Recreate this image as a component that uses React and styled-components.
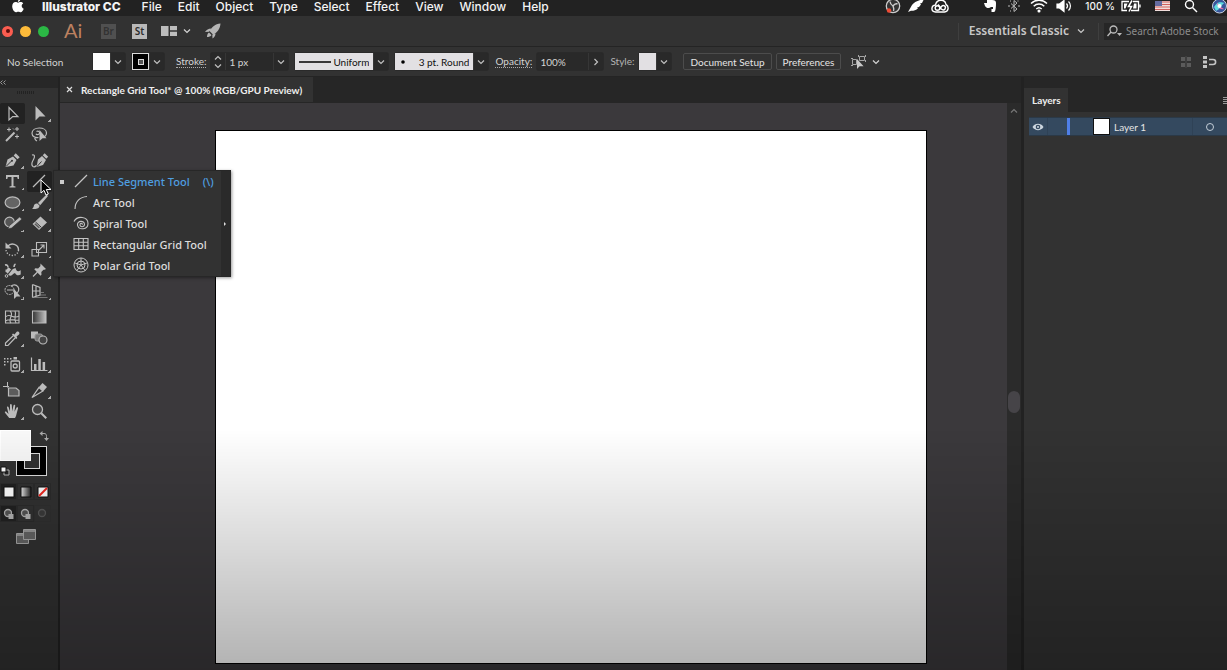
import React, { useState } from "react";
import styled, { createGlobalStyle, css } from "styled-components";

const menus = ["File", "Edit", "Object", "Type", "Select", "Effect", "View", "Window", "Help"];

const icons = {
	selection: <path d="M5 2.5v12.5l3.7-3.4h5.2z" fill="none" stroke="currentColor" strokeWidth="1.2" />,
	direct: <path d="M4.5 1v14.5l4-3.9h6z" fill="currentColor" />,
	wand: (
		<>
			<path d="M2 15 10.5 6.5" stroke="currentColor" strokeWidth="2" />
			<path d="M5 1.5v4M3 3.5h4M13 1v4M11 3h4M13 8.5v4M11 10.5h4M9 2.5l1 1" stroke="currentColor" />
		</>
	),
	lasso: (
		<>
			<path
				d="M7.5 11.500C4 12 1 10.300 1 7.300 1 4 4.300 2 8.300 2S15.500 4 15.500 7c0 1.700-.8 3-2 3.800M5.500 5.500c1.700-.8 3.700.4 3 2-.6 1.400-3 1.600-3.500.2M4 10.500c-.6 2 .2 3.600 2 4.500"
				fill="none"
				stroke="currentColor"
				strokeWidth="1.2"
			/>
			<path d="M8.500 4v11l3-2.700h4z" fill="currentColor" />
		</>
	),
	pen: (
		<>
			<path d="M1.500 15 3.500 7.500 9 4.500l3.500 3.500-3 5.500z" fill="currentColor" />
			<path d="m9.700 3.500 2-2.200 4 4-2.200 2z" fill="currentColor" />
			<path d="M2 14.500 7.500 9" stroke="#323232" />
			<circle cx="8" cy="8.700" r="1" fill="#323232" />
		</>
	),
	curvature: (
		<>
			<path d="M5.500 15 7 7.500 11 4l4 4-3 5z" fill="currentColor" />
			<path d="m11.700 3.200 2-2 3.500 3.500-2 2z" fill="currentColor" />
			<path d="M1 3c3-1 3 2 1.500 4.500S0 13 2 14.500c1.500 1 3-.5 3.500-1" fill="none" stroke="currentColor" strokeWidth="1.200" />
			<path d="m6 14.500 4.500-5" stroke="#323232" />
		</>
	),
	type: (
		<path
			d="M2 2h13v4h-1.300l-.5-2H9.500v9l2 .4v1.200h-6v-1.200l2-.4V4H3.800l-.5 2H2z"
			fill="currentColor"
		/>
	),
	line: <path d="M2 14 14 2" stroke="currentColor" strokeWidth="1.200" />,
	ellipse: <ellipse cx="8.500" cy="8.500" rx="7.400" ry="5.600" fill="#646464" stroke="currentColor" strokeWidth="1.200" />,
	brush: (
		<>
			<path d="M15.500.5 7 9l2.200 2.200L17 2z" fill="currentColor" />
			<path d="M6.300 9.500c-2-.3-3.300 1-3.500 2.500-.1 1.200-.8 2-1.800 2.700 3.500.6 7.500.2 7.500-3.200z" fill="currentColor" />
		</>
	),
	shaper: (
		<>
			<circle cx="5.500" cy="7" r="4.800" fill="#555" stroke="currentColor" strokeWidth="1.200" />
			<path d="m4 14 1.300-3.300L15.500 2 18 4 7.700 13z" fill="currentColor" stroke="#323232" strokeWidth=".7" />
		</>
	),
	eraser: (
		<>
			<path d="M9.500 1.500 16 7.500 8 15 1.500 9z" fill="currentColor" />
			<path d="m4.500 7 5.800 5.300" stroke="#323232" />
			<path d="m3.300 9.200 4.600 4.200 1-1-4.500-4.200z" fill="#5a5a5a" />
		</>
	),
	rotate: (
		<>
			<path d="M3.500 5.500C7 1 14.500 3 14.500 9" fill="none" stroke="currentColor" strokeWidth="1.400" />
			<path d="M1.500 1.500v6h6z" fill="currentColor" />
			<path d="M14.500 9C14 16 3 16.500 2 9" fill="none" stroke="currentColor" strokeWidth="1.400" strokeDasharray="1.200 1.600" />
		</>
	),
	scale: (
		<g fill="none" stroke="currentColor" strokeWidth="1.100">
			<path d="M5.500 1.500h10v10h-10zM1 8.500h6.500V15H1z" />
			<path d="m8 9 5-5M9.500 4H13v3.500" />
		</g>
	),
	width: (
		<>
			<path d="M4 5.500c1.500 0 2 1.500 3.500 2L11.500 6c.5 2 1.500 3.500 3 3.200 1 0 1.700-.6 2.200-1.200v4.500c-2.500 1.700-4.500.5-5.700-1.500-2 0-2.500 3.500-5.500 2.500C3.500 13 4 10.500 1.500 10V7.500c1 .3 2-.5 2.500-2z" fill="currentColor" />
			<path d="m2.500 14 8-10" stroke="#323232" strokeWidth="1.200" />
			<circle cx="2.500" cy="14" r="1.300" fill="none" stroke="currentColor" />
			<path d="M1 3c2-.5 3 .5 3 2.500M10 5c0-1.500.5-2.500 1.500-3" fill="none" stroke="currentColor" strokeWidth="1.600" />
		</>
	),
	pin: (
		<>
			<path d="m9.500 1.500 5.500 5.500-1.500.7-1 .1-2.200 2.200.2 2.800-1 1L3.300 7.300l1-1 2.800.2 2.200-2.200.1-1z" fill="currentColor" />
			<path d="M6.500 10 2 14.500" stroke="currentColor" strokeWidth="1.300" />
		</>
	),
	builder: (
		<>
			<circle cx="5.500" cy="7" r="4.500" fill="none" stroke="currentColor" strokeDasharray="2 .8" />
			<path d="M7 3.300a4.500 4.500 0 1 1 5.500 7M3 7h7" fill="none" stroke="currentColor" strokeWidth="1.200" />
			<path d="M10 6v10l2.600-2.600h3.900z" fill="currentColor" />
		</>
	),
	perspective: (
		<>
			<path d="M1.500 1.500v13M1.500 1.500 9 4.500V12L1.500 14.500M1.500 8H9M5 3v10" fill="none" stroke="currentColor" strokeWidth="1.200" />
			<path d="M3 14.500h13.500M8 12h7M9.500 9.500H13" stroke="#8a8a8a" strokeWidth=".8" />
		</>
	),
	mesh: (
		<g fill="none" stroke="currentColor" strokeWidth="1.100">
			<path d="M1.500 2h13.500v12H1.500z" />
			<path d="M1.500 8C6 3 9 11 15 7M6 2c5 4-3 8 1 12M11 2c2 4-2 7 1 12M1.500 12c4-3 9 0 13.500-1" />
		</g>
	),
	gradient: (
		<>
			<defs>
				<linearGradient id="toolGradient">
					<stop offset="0" stopColor="#333" />
					<stop offset="1" stopColor="#c4c4c4" />
				</linearGradient>
			</defs>
			<path d="M1.500 2h13.500v12H1.500z" fill="url(#toolGradient)" stroke="currentColor" strokeWidth="1.100" />
		</>
	),
	dropper: (
		<>
			<path d="m9.500 5.500-8 7.500v2.500H4l7.500-8" fill="none" stroke="currentColor" strokeWidth="1.200" />
			<path d="m8 4.500 1-1 1.500 1 2-2.500c1.500-1.500 4 .8 2.500 2.500l-2.500 2 .8 1.500-1 1z" fill="currentColor" />
		</>
	),
	blend: (
		<>
			<path d="M0 1.500h7v7H0z" fill="currentColor" />
			<rect x="4" y="4" width="7.500" height="7" rx="2" fill="#777" stroke="#999" />
			<circle cx="12" cy="10" r="4" fill="#444" stroke="currentColor" strokeWidth="1.100" />
		</>
	),
	sprayer: (
		<>
			<path d="M0 2h1.500v1.500H0zM3 2h1.500v1.500H3zM6 2h1.500v1.500H6zM0 5h1.500v1.500H0zM3 5h1.500v1.500H3zM0 8h1.500v1.500H0zM9.500 1H13v2.500H9.500z" fill="currentColor" />
			<rect x="7" y="5" width="8.500" height="10" rx="1" fill="none" stroke="currentColor" strokeWidth="1.300" />
			<circle cx="11.200" cy="10" r="2" fill="none" stroke="currentColor" strokeWidth="1.300" />
		</>
	),
	graph: (
		<>
			<path d="M.5 1.500v13h16" fill="none" stroke="currentColor" strokeWidth="1.200" />
			<path d="M3 8h2.500v6H3zM7.300 3h2.500v11H7.300zM11.600 6h2.500v8h-2.500z" fill="currentColor" />
		</>
	),
	artboard: (
		<>
			<path d="M3.500 0v5.500M-1 4.500h6" stroke="currentColor" />
			<path d="M4.500 6H12l3 2.500V14H4.500z" fill="#5c5c5c" stroke="currentColor" strokeWidth="1.200" />
		</>
	),
	slice: (
		<>
			<path d="M1 15.500 8 5.500l4 3.500z" fill="none" stroke="currentColor" strokeWidth="1.300" />
			<path d="m8 5 3.500-4 4.500 4-3.500 4z" fill="currentColor" />
		</>
	),
	hand: (
		<path
			d="M5.200 15 1 9.700c-.6-1.200.8-1.700 1.600-.8L4.500 11 3 4.500c-.2-1.300 1.300-1.500 1.600-.3L6 8.500 6 2c0-1.300 1.700-1.300 1.800 0l.4 6.300L9.500 2.500c.3-1.200 1.800-.9 1.700.3l-.7 6 2-4c.6-1 1.900-.4 1.500.7-.8 2.500-1.200 5-2 7.500l-1 2z"
			fill="currentColor"
		/>
	),
	zoom: (
		<>
			<circle cx="6.500" cy="6.500" r="5" fill="#444" stroke="currentColor" strokeWidth="1.300" />
			<path d="m10.300 10.300 5 5" stroke="currentColor" strokeWidth="2" />
		</>
	),
	arc: <path d="M2 15C2 7.500 7 3 14 2.500" fill="none" stroke="currentColor" strokeWidth="1.100" />,
	spiral: (
		<path
			d="M1 6.500C4 .5 15 1 15 8.500c0 6.500-9.500 7-10.500 1.500C4 5.500 11.500 5 11.500 9.500c-.3 3-4.800 2.800-4.500 0 .3-1.800 2.500-1.500 2.300.2"
			fill="none"
			stroke="currentColor"
			strokeWidth="1.100"
		/>
	),
	grid: <path d="M1 2.500h14v11H1zM1 6.200h14M1 9.800h14M5.700 2.500v11M10.300 2.500v11" fill="none" stroke="currentColor" strokeWidth="1.100" />,
	polar: (
		<g fill="none" stroke="currentColor">
			<circle cx="8" cy="8" r="7" />
			<circle cx="8" cy="8" r="4" />
			<path d="M8 1v7l6.500-2.200M8 8l4.200 5.700M8 8l-4.200 5.700M8 8 1.500 5.800" />
		</g>
	),
};

const toolGroups = [
	["selection", "direct", "wand", "lasso"],
	["pen", "curvature", "type", "line", "ellipse", "brush", "shaper", "eraser"],
	["rotate", "scale", "width", "pin", "builder", "perspective"],
	["mesh", "gradient", "dropper", "blend"],
	["sprayer", "graph"],
	["artboard", "slice", "hand", "zoom"],
];

const singleTools = ["selection", "wand", "lasso", "curvature", "mesh", "gradient", "blend", "artboard", "zoom", "line"];

const lineTools = [
	{ icon: "line", name: "Line Segment Tool", shortcut: "(\\)" },
	{ icon: "arc", name: "Arc Tool" },
	{ icon: "spiral", name: "Spiral Tool" },
	{ icon: "grid", name: "Rectangular Grid Tool" },
	{ icon: "polar", name: "Polar Grid Tool" },
];

const Icon = ({ name, size = 17 }) => (
	<svg width={size} height={size} viewBox="0 0 17 17" aria-hidden="true">
		{icons[name]}
	</svg>
);

const Chevron = ({ dir = "down" }) => (
	<svg width="8" height="8" viewBox="0 0 8 8" fill="none" stroke="currentColor" strokeWidth="1.200" aria-hidden="true">
		<path d={{ down: "M1 2.500 4 5.500 7 2.500", right: "M2.500 1 5.500 4 2.500 7", up: "M1 5.500 4 2.500 7 5.500" }[dir]} />
	</svg>
);

const MenuBar = () => (
	<MenuBarRow>
		<MenuList aria-label="Application menu">
			<AppleButton aria-label="Apple">
				<svg width="12" height="14" viewBox="0 0 12 14" fill="#fff">
					<path d="M8.300 0c.1 1.500-1 2.800-2.400 2.900C5.800 1.500 7 .2 8.300 0zM6 3.800c.7 0 1.400-.7 2.600-.7 1 0 2 .5 2.600 1.400-2.200 1.300-1.900 4.300.5 5.200-.5 1.500-1.700 3.500-3 3.500-.9 0-1.300-.5-2.400-.5s-1.500.5-2.400.5C2 13.200.2 10 .2 7.300c0-2.700 1.700-4.200 3.400-4.200 1.100 0 1.800.7 2.400.7z" />
				</svg>
			</AppleButton>
			<MenuItem $bold>Illustrator CC</MenuItem>
			{menus.map((el) => (
				<MenuItem key={el}>{el}</MenuItem>
			))}
		</MenuList>
		<StatusList>
			<svg width="16" height="16" viewBox="0 0 16 16">
				<circle cx="8" cy="8" r="6.700" fill="#333" stroke="#ccc" strokeWidth="1.300" />
				<path d="M5 3.500c.2 2.500 1.500 3.500 3 4.500M12.500 6C10.500 5 9 6.500 8 8M8.500 13c1-2-.2-3.500-.5-5" stroke="#ccc" strokeWidth="1.400" fill="none" />
				<circle cx="4" cy="12.500" r="2.200" fill="#ee4b35" />
			</svg>
			<svg width="16" height="16" viewBox="0 0 16 16" fill="#fff">
				<path d="M0 14 4 7c2-3 7-5 12-6l-2 4-2 .5 1 1-2 2.500-2 .5 1 .8c-2 2-5 2.700-7 2.500z" />
			</svg>
			<svg width="18" height="16" viewBox="0 0 18 16" fill="none" stroke="#fff" strokeWidth="1.400">
				<path d="M4.500 14C-.5 13.500 0 7.500 4.500 7 5.500 1 14 .5 15 6.500c3 1.500 3 7-1.500 7.500z" />
				<circle cx="6.500" cy="10" r="2.300" />
				<path d="M8.300 11.500 10.500 8.500c2-2.500 5 0 3.500 2.500-1 1.500-2.500 1-3.700 0L7 6.500" />
			</svg>
			<StatusGap />
			<svg width="14" height="16" viewBox="0 0 14 16" fill="#fff">
				<path d="M1 5h3V2l2-1 3 1c3 0 4 1 4 3 0 4-.3 9-2 9H8.500v-3H10V9H8c-2 2-5 1-6-1z" />
			</svg>
			<svg width="16" height="16" viewBox="-4 0 16 16" fill="none" stroke="#b9b9b9">
				<path d="M3 5.500 9 11l-3 2.500v-11L9 5 3 10.500M0 8h2M10 8h2M2 3h1M9.500 3h1M2 13h1" />
			</svg>
			<svg width="22" height="16" viewBox="-3 0 22 16" fill="none" stroke="#fff" strokeWidth="1.500">
				<path d="M1 5.500c4.500-4.500 11.500-4.500 16 0M3.700 8.300c3-3 7.600-3 10.600 0M6.300 11c1.600-1.500 3.800-1.500 5.400 0" />
				<circle cx="9" cy="13" r=".8" fill="#fff" />
			</svg>
			<svg width="16" height="16" viewBox="0 0 16 16" fill="none" stroke="#fff" strokeWidth="1.200">
				<path d="M1 6h2.500L8 2.500v11L3.500 10H1z" fill="#fff" />
				<path d="M10.500 5.500c1.300 1.500 1.300 3.500 0 5M12.500 3.500c2.600 2.500 2.600 6.500 0 9" />
			</svg>
			<Battery>100 %</Battery>
			<svg width="20" height="16" viewBox="0 0 20 16" fill="none" stroke="#fff">
				<path d="M8 3.500H1v9h5M12 3.500h5.500v9H10M19 6.500v3" strokeWidth="1.300" />
				<path d="M3 5.500h3.500l-2 5H3zM13 5.500h2.500v5H12z" fill="#fff" stroke="none" />
				<path d="M11 2.500 7.500 8.500H10.500L8 13.500" strokeWidth="1.500" />
			</svg>
			<StatusGap $small />
			<svg width="15" height="16" viewBox="0 0 15 16">
				<path d="M0 3h15v10H0z" fill="#f1dedc" />
				<path d="M0 4h15M0 6.500h15M0 9h15M0 11.500h15" stroke="#d1605d" strokeWidth="1.200" />
				<path d="M0 3h7v5H0z" fill="#656ba0" />
			</svg>
			<StatusGap $small />
			<svg width="14" height="16" viewBox="0 0 14 16" fill="none" stroke="#fff" strokeWidth="1.400">
				<circle cx="5.500" cy="6.500" r="4" />
				<path d="m8.500 9.500 4.500 4.500" />
			</svg>
			<StatusGap $small />
			<svg width="15" height="16" viewBox="0 0 15 16">
				<circle cx="7.500" cy="8" r="7" fill="#38569b" stroke="#cad1df" />
				<path d="M2 9c4-6 6-5 11-4-3 0-4 6-9 8z" fill="#60dce0" />
				<path d="M5 4c2 5 4 5 7 7-4 1-7-2-7-7z" fill="#e66fae" />
				<circle cx="7.500" cy="8" r="2" fill="#fff" />
			</svg>
		</StatusList>
	</MenuBarRow>
);

const AppBar = () => (
	<AppBarRow>
		<Lights>
			<Light $color="#fb5d50" aria-label="Close"><i /></Light>
			<Light $color="#fdbb3a" aria-label="Minimize" />
			<Light $color="#2bb845" aria-label="Full screen" />
		</Lights>
		<Brand>Ai</Brand>
		<AppBadge $dim>Br</AppBadge>
		<AppBadge>St</AppBadge>
		<ArrangeButton aria-label="Arrange documents">
			<svg width="16" height="12" viewBox="0 0 16 12" fill="#bdbdbd">
				<path d="M0 1h7.500v10H0zM9 1h7v4.300H9zM9 6.700h7V11H9z" />
			</svg>
			<Chevron />
		</ArrangeButton>
		<PlainButton aria-label="GPU performance">
			<svg width="16" height="16" viewBox="0 0 16 16" fill="#b5b5b5">
				<path d="M15.500.5C10 1 7 4 4.500 8L8 11.500c4.500-2 7-5.500 7.500-11zM6 5.500C3.500 5.500 1.500 7 0 9l4-.3zM10.500 10.500c0 2-1 3.700-3 5l-.2-3.700zM4 9.500c-1.500.5-2 3-2 4.500 1.500 0 4-.5 4.500-2z" />
			</svg>
		</PlainButton>
		<Workspace>
			Essentials Classic <Chevron />
		</Workspace>
		<StockSearch>
			<svg width="15" height="12" viewBox="0 0 15 12" fill="none" stroke="#bbb" strokeWidth="1.300">
				<circle cx="6.500" cy="4.500" r="3.500" />
				<path d="M4 7 .5 11" />
				<path d="M10 8h5l-2.500 3z" fill="#bbb" stroke="none" />
			</svg>
			<input type="text" aria-label="Search Adobe Stock" placeholder="Search Adobe Stock" />
		</StockSearch>
	</AppBarRow>
);

const ControlBar = () => {
	const [stroke, setStroke] = useState("1 px");
	const [opacity, setOpacity] = useState("100%");

	return (
		<ControlRow>
			<Status>No Selection</Status>
			<Combo>
				<Swatch $color="#fff" aria-label="Fill" />
				<DropButton aria-label="Fill options"><Chevron /></DropButton>
			</Combo>
			<Combo>
				<Swatch $color="#000" $outlined aria-label="Stroke color"><i /></Swatch>
				<DropButton aria-label="Stroke color options"><Chevron /></DropButton>
			</Combo>
			<FieldGroup $start>
				<FieldLabel htmlFor="stroke" $dotted>Stroke:</FieldLabel>
				<Combo>
					<Stepper aria-label="Step stroke weight">
						<Chevron dir="up" />
						<Chevron />
					</Stepper>
					<ValueInput id="stroke" value={stroke} onChange={(e) => setStroke(e.target.value)} />
					<DropButton aria-label="Stroke weights"><Chevron /></DropButton>
				</Combo>
			</FieldGroup>
			<Combo>
				<Profile>
					<svg width="32" height="4" viewBox="0 0 32 4"><path d="M0 2h32" stroke="#000" strokeWidth="1.500" /></svg>
					<select aria-label="Width profile"><option>Uniform</option></select>
				</Profile>
				<DropButton aria-label="Width profiles"><Chevron /></DropButton>
			</Combo>
			<Combo>
				<Profile>
					<svg width="8" height="8" viewBox="0 0 8 8"><circle cx="4" cy="4" r="1.800" /></svg>
					<select aria-label="Brush"><option>3 pt. Round</option></select>
				</Profile>
				<DropButton aria-label="Brushes"><Chevron /></DropButton>
			</Combo>
			<FieldGroup>
				<FieldLabel htmlFor="opacity" $dotted>Opacity:</FieldLabel>
				<Combo>
					<ValueInput id="opacity" $wide value={opacity} onChange={(e) => setOpacity(e.target.value)} />
					<DropButton aria-label="Opacity slider"><Chevron dir="right" /></DropButton>
				</Combo>
			</FieldGroup>
			<FieldGroup>
				<FieldLabel as="span">Style:</FieldLabel>
				<Combo>
					<Swatch $color="#e2e0e3" aria-label="Graphic style" />
					<DropButton aria-label="Graphic styles"><Chevron /></DropButton>
				</Combo>
			</FieldGroup>
			<ButtonGroup>
				<BarButton>Document Setup</BarButton>
				<BarButton>Preferences</BarButton>
			</ButtonGroup>
			<ArrangeButton aria-label="Select similar objects">
				<svg width="15" height="14" viewBox="0 0 15 14" fill="none" stroke="#a5a5a5">
					<path d="M1.500 4.500h4v5h-4zM0 3.500h2M0 10.500h2M8.500 1.500h5v4h-5zM7.500 0v2M14.500 0v2M14.500 5v2" />
					<path d="M6 4v10l2.600-2.700h4z" fill="#c8c8c8" stroke="none" />
				</svg>
				<Chevron />
			</ArrangeButton>
			<BarEnd>
				<svg width="12" height="12" viewBox="0 0 12 12" fill="#5b5b5b">
					<path d="M1 1h4v4H1zM7 1h4v4H7zM1 7h4v4H1zM7 7h4v4H7zM5.700 0h.6v12h-.6z" />
				</svg>
				<svg width="14" height="12" viewBox="0 0 14 12" fill="#c4c4c4">
					<path d="M0 0h4v3H0zM0 4.500h4v3H0zM0 9h4v3H0z" />
					<path d="M6 3.500h4c3.500 0 3.500 5 0 5H6" fill="none" stroke="#c4c4c4" strokeWidth="1.600" />
				</svg>
			</BarEnd>
		</ControlRow>
	);
};

const LineToolMenu = () => (
	<Flyout>
		<FlyoutList>
			{lineTools.map((el, i) => (
				<FlyoutItem key={el.name} $active={i === 0}>
					<FlyoutMark $active={i === 0} />
					<Icon name={el.icon} />
					<span>{el.name}</span>
					{el.shortcut && <kbd>{el.shortcut}</kbd>}
				</FlyoutItem>
			))}
		</FlyoutList>
		<TearOff aria-label="Tear off">
			<svg width="3" height="6" viewBox="0 0 3 6"><path d="M0 1v4l2-2z" fill="#ddd" /></svg>
		</TearOff>
	</Flyout>
);

const ToolPanel = () => (
	<Tools>
		<PanelCollapse aria-label="Collapse panel">
			<svg width="6" height="5" viewBox="0 0 6 5" fill="none" stroke="#999"><path d="M2.500.5.500 2.500l2 2M5.500.5l-2 2 2 2" /></svg>
		</PanelCollapse>
		<Grip />
		{toolGroups.map((group) => (
			<ToolGroup key={group[0]}>
				{group.map((name) => (
					<ToolCell key={name}>
						<ToolButton
							aria-label={name}
							$pressed={name === "selection" || name === "line"}
							$more={!singleTools.includes(name)}
						>
							<Icon name={name} />
						</ToolButton>
						{name === "line" && (
							<>
								<LineToolMenu />
								<Pointer width="12" height="18" viewBox="0 0 12 18">
									<path d="M1 1v13l3-2.700 2 4.700 2.300-1-2-4.500H11z" fill="#000" stroke="#fff" />
								</Pointer>
							</>
						)}
					</ToolCell>
				))}
			</ToolGroup>
		))}
		<ColorWell>
			<StrokeWell aria-label="Stroke"><i /></StrokeWell>
			<FillWell aria-label="Fill" />
			<SwapButton aria-label="Swap fill and stroke">
				<svg width="10" height="10" viewBox="0 0 10 10" fill="none" stroke="#aaa">
					<path d="M2 2.500h3c2 0 2.500 1 2.500 3V8" />
					<path d="M3.500 0v5L.5 2.500zM5 7h5L7.500 10z" fill="#aaa" stroke="none" />
				</svg>
			</SwapButton>
			<ResetButton aria-label="Default fill and stroke">
				<svg width="10" height="10" viewBox="0 0 10 10">
					<path d="M4 4h5v5H4z" fill="#222" stroke="#bbb" />
					<path d="M1 1h5v5H1z" fill="#fff" stroke="#111" />
				</svg>
			</ResetButton>
		</ColorWell>
		<ModeRow>
			<ModeButton aria-label="Color" $on>
				<svg width="12" height="12"><path d="M1 1h10v10H1z" fill="#fff" stroke="#111" /></svg>
			</ModeButton>
			<ModeButton aria-label="Gradient">
				<svg width="12" height="12">
					<defs>
						<linearGradient id="modeGradient">
							<stop offset="0" stopColor="#eee" />
							<stop offset="1" stopColor="#222" />
						</linearGradient>
					</defs>
					<path d="M1 1h10v10H1z" fill="url(#modeGradient)" stroke="#111" />
				</svg>
			</ModeButton>
			<ModeButton aria-label="None">
				<svg width="12" height="12"><path d="M1 1h10v10H1z" fill="#fff" stroke="#111" /><path d="m2 10 8-8" stroke="#f0261f" strokeWidth="2" /></svg>
			</ModeButton>
		</ModeRow>
		<ModeRow>
			{["Draw normal", "Draw behind", "Draw inside"].map((el, i) => (
				<ModeButton key={el} aria-label={el} $on={i === 0} $faint={i === 2}>
					<svg width="12" height="12" viewBox="0 0 12 12">
						<circle cx="5" cy="5" r="3.500" fill="#555" stroke="#b5b5b5" strokeWidth="1.300" />
						{i < 2 && <path d="M5.500 6h5v5h-5z" fill="#b5b5b5" />}
					</svg>
				</ModeButton>
			))}
		</ModeRow>
		<ScreenMode aria-label="Change screen mode">
			<svg width="20" height="15" viewBox="0 0 20 15" fill="#666" stroke="#aaa">
				<path d="M.5 4.500h12v10H.5z" />
				<path d="M7.500.5h12v10h-12z" />
				<path d="M8 2h11M1 6h6" strokeWidth="1.500" />
			</svg>
		</ScreenMode>
	</Tools>
);

const LayersPanel = () => (
	<Dock>
		<DockTabs>
			<DockTab>Layers</DockTab>
			<PanelMenu aria-label="Panel menu">
				<svg width="8" height="8" viewBox="0 0 8 8" stroke="#999"><path d="M0 1.500h8M0 3.500h8M0 5.500h8M0 7.500h8" /></svg>
			</PanelMenu>
		</DockTabs>
		<DockBody>
			<LayerRow>
				<LayerEye aria-label="Toggle visibility">
					<svg width="12" height="8" viewBox="0 0 12 8">
						<path d="M.5 4C3-.2 9-.2 11.500 4 9 8.200 3 8.200.5 4z" fill="#ccd6df" />
						<circle cx="6" cy="4" r="2.300" fill="#34495f" />
						<circle cx="6" cy="4" r="1" fill="#ccd6df" />
					</svg>
				</LayerEye>
				<LayerColor />
				<LayerThumb />
				<LayerName>Layer 1</LayerName>
				<LayerTarget aria-label="Target layer"><i /></LayerTarget>
			</LayerRow>
		</DockBody>
	</Dock>
);

const App = () => {
	return (
		<Screen>
			<GlobalStyle />
			<MenuBar />
			<AppBar />
			<ControlBar />
			<Main>
				<ToolPanel />
				<Document>
					<TabBar>
						<Tab>
							<PlainButton aria-label="Close document">
								<svg width="7" height="7" viewBox="0 0 7 7" stroke="#ddd" strokeWidth="1.200"><path d="m1 1 5 5M6 1 1 6" /></svg>
							</PlainButton>
							Rectangle Grid Tool* @ 100% (RGB/GPU Preview)
						</Tab>
					</TabBar>
					<CanvasRow>
						<Canvas>
							<Artboard />
						</Canvas>
						<ScrollTrack>
							<Chevron dir="up" />
							<ScrollThumb />
						</ScrollTrack>
					</CanvasRow>
				</Document>
				<LayersPanel />
			</Main>
		</Screen>
	);
};

const GlobalStyle = createGlobalStyle`
	* {
		box-sizing: border-box;
	}
	body {
		margin: 0;
		background: #323232;
		color: #d4d4d4;
		font: 11px "Noto Sans", "Open Sans", sans-serif;
	}
	button, input, select {
		font: inherit;
		color: inherit;
		margin: 0;
		padding: 0;
		border: 0;
		border-radius: 0;
		background: none;
		min-width: 0;
	}
	svg {
		display: block;
		flex: none;
		overflow: visible;
	}
`;

const smallText = css`
	font-family: Lato, "Noto Sans", sans-serif;
	font-size: 10px;
`;

const Screen = styled.div`
	display: flex;
	flex-direction: column;
	height: 100vh;
	overflow: hidden;

	/* shade over the lower part of the window */
	&::after {
		content: "";
		position: fixed;
		inset: 64% 0 0;
		background: linear-gradient(transparent, rgba(0, 0, 0, 0.3));
		pointer-events: none;
		z-index: 5;
	}
`;

const PlainButton = styled.button`
	display: flex;
	align-items: center;
	justify-content: center;
`;

const MenuBarRow = styled.header`
	display: flex;
	justify-content: space-between;
	flex: none;
	height: 16px;
	padding: 0 0 2px 12px;
	background: #222;
	color: #f4f4f4;
	font: 500 12px/14px Inter, sans-serif;
`;

const MenuList = styled.nav`
	display: flex;
	align-items: center;
	gap: 16px;
`;

const AppleButton = styled(PlainButton)`
	height: 14px;
	padding-bottom: 2px;
	margin-right: 2px;
`;

const MenuItem = styled.button`
	font-weight: ${(p) => (p.$bold ? 800 : 500)};
	margin-right: ${(p) => (p.$bold ? "5px" : "0")};
	line-height: 14px;
	white-space: nowrap;
`;

const StatusList = styled.div`
	display: flex;
	align-items: center;
	gap: 7px;
	height: 12px;
`;

const StatusGap = styled.span`
	width: ${(p) => (p.$small ? "0" : "20px")};
`;

const Battery = styled.span`
	font-size: 10px;
	line-height: 12px;
	margin: 0 -1px 0 6px;
`;

const AppBarRow = styled.div`
	display: flex;
	align-items: center;
	flex: none;
	height: 31px;
	padding-left: 2px;
	background: #323232;
	border-bottom: 1px solid #242424;
`;

const Lights = styled.div`
	display: flex;
	gap: 7px;
	margin-right: 15px;
`;

const Light = styled(PlainButton)`
	width: 11px;
	height: 11px;
	border-radius: 50%;
	background: ${(p) => p.$color};

	i {
		width: 4px;
		height: 4px;
		border-radius: 50%;
		background: #5b0d0a;
	}
`;

const Brand = styled.span`
	width: 37px;
	padding-bottom: 3px;
	color: #bd8160;
	font: 20px/24px Lato, sans-serif;
`;

const AppBadge = styled.button`
	width: 15px;
	height: 15px;
	margin-right: 16px;
	background: ${(p) => (p.$dim ? "#505050" : "#b9b9b9")};
	color: ${(p) => (p.$dim ? "#333" : "#2d2d2d")};
	font-weight: 600;
	font-size: 10px;
	line-height: 15px;
`;

const ArrangeButton = styled(PlainButton)`
	gap: 6px;
	margin: 0 14px 0 -2px;
`;

const Workspace = styled.button`
	display: flex;
	align-items: center;
	gap: 8px;
	height: 17px;
	margin-left: auto;
	padding: 0 13px 0 10px;
	border: solid #3f3f3f;
	border-width: 0 1px;
	color: #c8c8c8;
	font-weight: 600;
	font-size: 12px;
	line-height: 16px;
	white-space: nowrap;
`;

const StockSearch = styled.label`
	display: flex;
	align-items: center;
	gap: 4px;
	width: 123px;
	height: 17px;
	margin-left: 5px;
	padding-left: 3px;
	background: #262626;

	input {
		flex: 1;
		outline: none;
		font-size: 10px;
	}
	input::placeholder {
		color: #8c8c8c;
	}
`;

const ControlRow = styled.div`
	${smallText}
	display: flex;
	align-items: center;
	flex: none;
	gap: 7px;
	height: 30px;
	padding: 0 10px 0 7px;
	border-bottom: 1px solid #242424;
	white-space: nowrap;
`;

const Status = styled.span`
	width: 79px;
`;

const Combo = styled.div`
	display: flex;
	height: 17px;
	border-radius: 2px;
	background: #292929;
	box-shadow: 0 0 0 1px #2a2a2a;
`;

const Swatch = styled(PlainButton)`
	width: 17px;
	background: ${(p) => p.$color};
	${(p) =>
		p.$outlined &&
		css`
			border: 1px solid #ddd;
		`}

	i {
		width: 6px;
		height: 6px;
		border: 1px solid #ddd;
		background: #555;
	}
`;

const DropButton = styled(PlainButton)`
	width: 15px;
	border-left: 1px solid #363636;
	color: #c0c0c0;
`;

const FieldGroup = styled.div`
	display: flex;
	align-items: center;
	gap: 5px;
	margin-left: ${(p) => (p.$start ? "5px" : "0")};
`;

const FieldLabel = styled.label`
	line-height: 12px;
	color: ${(p) => (p.$dotted ? "#d4d4d4" : "#b4b4b4")};
	border-bottom: 1px ${(p) => (p.$dotted ? "dotted #aaa" : "solid transparent")};
`;

const Stepper = styled(PlainButton)`
	flex-direction: column;
	width: 15px;
	border-right: 1px solid #363636;
	color: #c0c0c0;
`;

const ValueInput = styled.input`
	width: ${(p) => (p.$wide ? "51px" : "47px")};
	padding-left: 3px;
	outline: none;
`;

const Profile = styled.div`
	display: flex;
	align-items: center;
	width: 78px;
	padding: 0 4px;
	background: #e2e0e3;
	color: #111;

	select {
		flex: 1;
		appearance: none;
		outline: none;
		text-align-last: right;
	}
`;

const ButtonGroup = styled.div`
	display: flex;
	gap: 4px;
	margin: 0 5px;
`;

const BarButton = styled.button`
	height: 17px;
	padding: 0 6px;
	border: 1px solid #4c4c4c;
	border-radius: 2px;
	color: #e4e4e4;
	line-height: 14px;
`;

const BarEnd = styled.div`
	display: flex;
	gap: 11px;
	margin-left: auto;
`;

const Main = styled.main`
	display: flex;
	flex: 1;
	min-height: 0;
`;

const Tools = styled.aside`
	display: flex;
	flex-direction: column;
	flex: none;
	width: 60px;
	border-right: 2px solid #222;
	background: #323232;
`;

const PanelCollapse = styled(PlainButton)`
	flex: none;
	justify-content: flex-start;
	height: 11px;
	background: #272727;
`;

const Grip = styled.div`
	width: 18px;
	height: 3px;
	margin: 3px 0 9px 17px;
	background: repeating-linear-gradient(90deg, #222 0 1px, #323232 1px 2px);
`;

const ToolGroup = styled.div`
	display: grid;
	grid-template-columns: 27px 27px;
	grid-auto-rows: 21px;
	width: 54px;
	margin-bottom: 5px;
`;

const ToolCell = styled.div`
	position: relative;
	display: flex;
`;

const ToolButton = styled(PlainButton)`
	position: relative;
	width: 25px;
	color: #bcbcbc;
	border-radius: 2px;
	background: ${(p) => (p.$pressed ? "#222" : "none")};

	&::after {
		content: "";
		display: ${(p) => (p.$more ? "block" : "none")};
		position: absolute;
		right: 1px;
		bottom: 2px;
		width: 3px;
		height: 3px;
		background: linear-gradient(135deg, transparent 50%, #aaa 50%);
	}
`;

const Pointer = styled.svg`
	position: absolute;
	left: 13px;
	top: 8px;
	z-index: 4;
`;

const Flyout = styled.div`
	position: absolute;
	left: 26px;
	top: -1px;
	z-index: 3;
	display: flex;
	width: 178px;
	background: #323232;
	border: 1px solid #272727;
	box-shadow: 1px 1px 3px rgba(0, 0, 0, 0.4);
`;

const FlyoutList = styled.div`
	flex: 1;
`;

const FlyoutItem = styled.button`
	display: flex;
	align-items: center;
	width: 100%;
	height: 21px;
	padding-left: 6px;
	color: ${(p) => (p.$active ? "#4f9fe0" : "#dcdcdc")};
	font-weight: 500;
	white-space: nowrap;

	svg {
		margin: 0 3px 0 9px;
		color: #c4c4c4;
	}
	kbd {
		margin-left: 13px;
		font: inherit;
	}
`;

const FlyoutMark = styled.i`
	width: 4px;
	height: 4px;
	background: ${(p) => (p.$active ? "#ccc" : "none")};
`;

const TearOff = styled(PlainButton)`
	width: 9px;
	background: #2a2a2a;
`;

const ColorWell = styled.div`
	position: relative;
	height: 48px;
	margin-top: 3px;
`;

const StrokeWell = styled(PlainButton)`
	position: absolute;
	left: 16px;
	top: 16px;
	width: 31px;
	height: 30px;
	border: 1px solid #ddd;
	background: #000;

	i {
		width: 16px;
		height: 16px;
		border: 1px solid #ddd;
		background: #323232;
	}
`;

const FillWell = styled.button`
	position: absolute;
	left: 0;
	top: 0;
	width: 31px;
	height: 31px;
	background: #f8f8f8;
	border: 1px solid #fff;
`;

const SwapButton = styled(PlainButton)`
	position: absolute;
	left: 39px;
	top: 1px;
`;

const ResetButton = styled(PlainButton)`
	position: absolute;
	left: 0;
	top: 36px;
`;

const ModeRow = styled.div`
	display: flex;
	height: 17px;
	margin-top: 5px;
`;

const ModeButton = styled(PlainButton)`
	width: 17px;
	border: 1px solid #2c2c2c;
	background: ${(p) => (p.$on ? "#222" : "none")};
	opacity: ${(p) => (p.$faint ? 0.3 : 1)};
`;

const ScreenMode = styled(PlainButton)`
	align-self: flex-start;
	margin: 7px 0 0 16px;
`;

const Document = styled.section`
	display: flex;
	flex-direction: column;
	flex: 1;
	min-width: 0;
`;

const TabBar = styled.div`
	display: flex;
	flex: none;
	height: 26px;
	background: #262626;
	border-bottom: 1px solid #262626;
`;

const Tab = styled.div`
	${smallText}
	display: flex;
	align-items: center;
	gap: 8px;
	padding: 0 11px 0 6px;
	background: #323232;
	color: #eee;
	font-weight: 700;
	white-space: nowrap;
`;

const CanvasRow = styled.div`
	display: flex;
	flex: 1;
	min-height: 0;
`;

const Canvas = styled.div`
	display: flex;
	flex: 1;
	padding: 27px 80px 6px 155px;
	background: #3b393c;
`;

const Artboard = styled.div`
	flex: 1;
	background: #fff;
	border: 1px solid #000;
`;

const ScrollTrack = styled.div`
	display: flex;
	flex-direction: column;
	align-items: center;
	width: 14px;
	padding-top: 4px;
	background: #2b2b2b;
	color: #777;
`;

const ScrollThumb = styled.div`
	width: 12px;
	height: 22px;
	margin-top: 276px;
	border-radius: 6px;
	background: #464448;
`;

const Dock = styled.aside`
	display: flex;
	flex-direction: column;
	flex: none;
	width: 206px;
	padding-top: 11px;
	border-left: 3px solid #222;
	background: #262626;
`;

const DockTabs = styled.div`
	display: flex;
	align-items: stretch;
	justify-content: space-between;
	flex: none;
	height: 24px;
`;

const DockTab = styled.button`
	${smallText}
	padding: 0 7px 0 8px;
	background: #323232;
	color: #eee;
	font-weight: 700;
`;

const PanelMenu = styled(PlainButton)`
	margin-right: -4px;
`;

const DockBody = styled.div`
	flex: 1;
	padding: 5px 0 0 5px;
	background: #323232;
`;

const LayerRow = styled.div`
	${smallText}
	display: flex;
	align-items: center;
	height: 19px;
	background: #34495f;
	border: solid #2b3947;
	border-width: 1px 0;
	color: #e4e4e4;
`;

const LayerEye = styled(PlainButton)`
	width: 19px;
	height: 17px;
	padding-right: 1px;
	border-right: 1px solid #2f4256;
`;

const LayerColor = styled.i`
	width: 3px;
	height: 17px;
	margin: 0 23px 0 19px;
	background: #4f7fe8;
`;

const LayerThumb = styled.i`
	width: 17px;
	height: 17px;
	border: 1px solid #111;
	background: #fff;
`;

const LayerName = styled.span`
	flex: 1;
	padding-left: 4px;
`;

const LayerTarget = styled(PlainButton)`
	width: 35px;
	height: 17px;
	border-left: 1px solid #2f4256;

	i {
		width: 8px;
		height: 8px;
		border: 1px solid #c4ced8;
		border-radius: 50%;
	}
`;

export default App;
